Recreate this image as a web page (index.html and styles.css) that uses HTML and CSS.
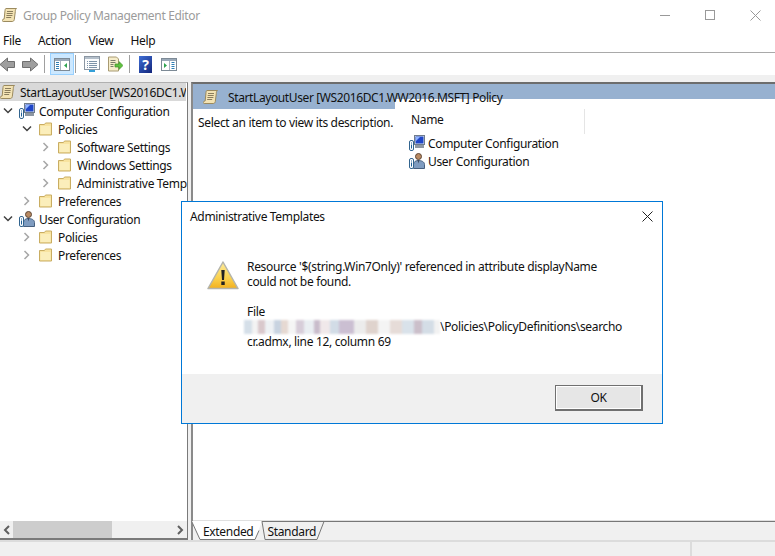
FILE: index.html
```html
<!DOCTYPE html>
<html lang="en">
  <head>
    <meta charset="UTF-8" />
    <title>Group Policy Management Editor</title>
    <link rel="stylesheet" href="styles.css">
  </head>
  <body>
    <svg class="defs" width="0" height="0">
      <defs>
        <linearGradient id="warn-fill" x1="0" y1="0" x2="0" y2="1">
          <stop offset="0" stop-color="#fdeb9c" />
          <stop offset="0.6" stop-color="#fbd24e" />
          <stop offset="1" stop-color="#f2b01e" />
        </linearGradient>
      </defs>
      <symbol id="scroll" viewBox="0 0 16 16">
        <path d="M4 1.500h10.500c-1.200 1-1.200 2-1.200 3l-1 8c-.2 1.300-1 2-2 2H1.200c-.8 0-1-.8-.8-1.400.2-.8 1-1.200 1.800-1.200L3 3.500c.1-1 .4-2 1-2z" fill="#f3e3b4" stroke="#9b8a5e" />
        <path d="M5 4.500h6M4.700 6.500h6M4.400 8.500h6M4.200 10.500h5" stroke="#8a7d5d" />
      </symbol>
      <symbol id="folder" viewBox="0 0 16 16">
        <path d="M1.500 14V3.500h5l1-1.500h6v12z" fill="#f8e39f" stroke="#c9ad62" />
        <path d="M2.500 13V5h10v8z" fill="#fbeebb" />
      </symbol>
      <symbol id="computer" viewBox="0 0 16 16">
        <rect x="5.500" y=".5" width="10" height="9" fill="#dfe6ee" stroke="#6f7c8c" />
        <rect x="6.500" y="1.500" width="8" height="7" fill="#1f46c8" />
        <path d="M7 2l4 0-4 4z" fill="#8fb4ff" />
        <rect x="6" y="10" width="9" height="3" fill="#8d97a3" />
        <rect x=".5" y="5.500" width="4" height="10" rx="1.500" fill="#fff" stroke="#31648f" />
        <path d="M2.500 7.500v1M2.500 9.500v4" stroke="#1f5f96" />
      </symbol>
      <symbol id="user" viewBox="0 0 16 16">
        <circle cx="9.500" cy="3.500" r="3" fill="#b98a62" stroke="#5e4635" />
        <path d="M4.500 15.500v-4C4.500 8.500 7 7.500 9.500 7.500s6 1 6 4v4z" fill="#7f9cc0" stroke="#47607f" />
        <path d="M8.500 7h2l-1 3.500z" fill="#3d4b60" />
        <rect x=".5" y="5.500" width="4" height="10" rx="1.500" fill="#fff" stroke="#31648f" />
        <path d="M2.500 7.500v1M2.500 9.500v4" stroke="#1f5f96" />
      </symbol>
      <symbol id="chev-right" viewBox="0 0 8 10">
        <path d="M1.500 1l4 4-4 4" fill="none" stroke="#a6a6a6" stroke-width="1.500" />
      </symbol>
      <symbol id="chev-down" viewBox="0 0 10 8">
        <path d="M1 1.500l4 4 4-4" fill="none" stroke="#404040" stroke-width="1.500" />
      </symbol>
      <symbol id="panel" viewBox="0 0 16 16">
        <rect x=".5" y="2.500" width="15" height="12" fill="#fff" stroke="#7d8a96" />
        <rect x="1" y="3" width="14" height="2" fill="#9aa9b8" />
        <path d="M2 6.500h3M2 8.500h3M2 10.500h3M2 12.500h3" stroke="#2f7fb5" />
        <path d="M6.500 5v9" stroke="#aab4be" />
        <path d="M13 7v5l-3-2.500z" fill="#2fa44f" />
      </symbol>
    </svg>

    <div class="window">
      <header class="titlebar">
        <svg class="icon"><use href="#scroll" /></svg>
        <span class="title-text">Group Policy Management Editor</span>
        <div class="controls">
          <span class="min-btn"></span>
          <span class="max-btn"></span>
          <svg class="close-btn" viewBox="0 0 11 11"><path d="M.5.500l10 10M10.500.500l-10 10" stroke="#999" /></svg>
        </div>
      </header>

      <nav class="menubar">
        <span>File</span>
        <span>Action</span>
        <span>View</span>
        <span>Help</span>
      </nav>

      <div class="toolbar">
        <svg class="arrows" viewBox="0 0 38 15">
          <path d="M0 7.500L7.500 1v3.500h7v6h-7V14z" fill="#9e9e9e" stroke="#6f6f6f" />
          <path d="M38 7.500L30.500 1v3.500h-8v6h8V14z" fill="#9e9e9e" stroke="#6f6f6f" />
        </svg>
        <i class="sep"></i>
        <span class="tool-on">
          <svg class="icon"><use href="#panel" /></svg>
        </span>
        <i class="sep"></i>
        <svg class="icon tool-a" viewBox="0 0 16 16">
          <rect x=".5" y=".5" width="15" height="13" fill="#fbfcfd" stroke="#8b96a2" />
          <rect x="1" y="1" width="14" height="2" fill="#b4bfca" />
          <path d="M3 5.500h1M5 5.500h8M3 7.500h1M5 7.500h8M3 9.500h1M5 9.500h8M3 11.500h1M5 11.500h8" stroke="#7d93a8" />
          <rect x="5" y="14" width="6" height="2" fill="#35a0d8" />
        </svg>
        <svg class="icon tool-b" viewBox="0 0 16 16">
          <path d="M1.500 1h8l2 2v12h-10z" fill="#f6edca" stroke="#a89a72" />
          <path d="M3.500 4.500h5M3.500 6.500h5M3.500 8.500h3M3.500 10.500h3" stroke="#7c7c6c" />
          <path d="M8 8h4V5.500L16 9.500l-4 4V11H8z" fill="#5fc13f" stroke="#3f8f2a" stroke-width=".7" />
        </svg>
        <i class="sep sep-wide"></i>
        <span class="help-icon">?</span>
        <svg class="icon tool-c" viewBox="0 0 16 16">
          <rect x=".5" y="2.500" width="15" height="12" fill="#fff" stroke="#7d8a96" />
          <rect x="1" y="3" width="14" height="2" fill="#9aa9b8" />
          <path d="M3 7v5l3-2.500z" fill="#2fa44f" />
          <path d="M8.500 5v9" stroke="#aab4be" />
          <path d="M10.500 6.500h3M10.500 8.500h3M10.500 10.500h3M10.500 12.500h3" stroke="#2f7fb5" />
        </svg>
      </div>

      <div class="workspace">
        <aside class="tree-pane">
          <ul class="tree">
            <li class="row selected"><svg class="icon"><use href="#scroll" /></svg><span>StartLayoutUser [WS2016DC1.WW2016.MSFT] Policy</span></li>
            <li class="row lvl-1"><svg class="chev-d"><use href="#chev-down" /></svg><svg class="icon"><use href="#computer" /></svg><span>Computer Configuration</span></li>
            <li class="row lvl-2"><svg class="chev-d"><use href="#chev-down" /></svg><svg class="icon"><use href="#folder" /></svg><span>Policies</span></li>
            <li class="row lvl-3"><svg class="chev-r"><use href="#chev-right" /></svg><svg class="icon"><use href="#folder" /></svg><span>Software Settings</span></li>
            <li class="row lvl-3"><svg class="chev-r"><use href="#chev-right" /></svg><svg class="icon"><use href="#folder" /></svg><span>Windows Settings</span></li>
            <li class="row lvl-3"><svg class="chev-r"><use href="#chev-right" /></svg><svg class="icon"><use href="#folder" /></svg><span>Administrative Templates</span></li>
            <li class="row lvl-2"><svg class="chev-r"><use href="#chev-right" /></svg><svg class="icon"><use href="#folder" /></svg><span>Preferences</span></li>
            <li class="row lvl-1"><svg class="chev-d"><use href="#chev-down" /></svg><svg class="icon"><use href="#user" /></svg><span>User Configuration</span></li>
            <li class="row lvl-2"><svg class="chev-r"><use href="#chev-right" /></svg><svg class="icon"><use href="#folder" /></svg><span>Policies</span></li>
            <li class="row lvl-2"><svg class="chev-r"><use href="#chev-right" /></svg><svg class="icon"><use href="#folder" /></svg><span>Preferences</span></li>
          </ul>
          <div class="hscroll">
            <svg class="scroll-arrow" viewBox="0 0 8 10"><path d="M6 1L2 5l4 4" fill="none" stroke="#606060" stroke-width="2" /></svg>
            <div class="scroll-track"><div class="scroll-thumb"></div></div>
            <svg class="scroll-arrow" viewBox="0 0 8 10"><path d="M2 1l4 4-4 4" fill="none" stroke="#606060" stroke-width="2" /></svg>
          </div>
        </aside>

        <main class="detail-pane">
          <div class="detail-body">
            <section class="desc-col">
              <div class="band band-tall">
                <svg class="icon"><use href="#scroll" /></svg>
                <span class="band-title">StartLayoutUser [WS2016DC1.WW2016.MSFT] Policy</span>
              </div>
              <p class="desc-text">Select an item to view its description.</p>
            </section>
            <section class="list-col">
              <div class="band band-short"></div>
              <div class="list-head"><span>Name</span></div>
              <div class="list-item"><svg class="icon"><use href="#computer" /></svg><span>Computer Configuration</span></div>
              <div class="list-item"><svg class="icon"><use href="#user" /></svg><span>User Configuration</span></div>
            </section>
          </div>
          <div class="tabstrip">
            <svg class="tab-shapes" viewBox="0 0 140 20">
              <path d="M.5 0L9 18.500h55L71 0z" fill="#fff" />
              <path d="M71 1l3 17.500h52L133 1z" fill="#f0f0f0" />
              <path d="M.5 0L9 18.500h55l4-9M71 .5l3 18h52l7-18" fill="none" stroke="#777" />
            </svg>
            <span class="tab">Extended</span>
            <span class="tab">Standard</span>
          </div>
        </main>
      </div>

      <footer class="statusbar">
        <span class="status-main"></span>
        <span class="status-side"></span>
      </footer>
    </div>

    <div class="dialog">
      <div class="dialog-head">
        <span>Administrative Templates</span>
        <svg class="dialog-close" viewBox="0 0 11 11"><path d="M.5.500l10 10M10.500.500l-10 10" stroke="#222" /></svg>
      </div>
      <div class="dialog-body">
        <svg class="warn" viewBox="0 0 32 29">
          <path d="M16 1L1 27.500h30z" fill="url(#warn-fill)" stroke="#b4b4ac" stroke-width="1.500" stroke-linejoin="round" />
          <path d="M14.300 9h3.400l-.7 10h-2zM14.300 20.500h3.400v3.500h-3.400z" fill="#222" />
        </svg>
        <div class="message">
          <p>Resource '$(string.Win7Only)' referenced in attribute displayName<br />could not be found.</p>
          <p>File<br /><span class="redacted"></span>\Policies\PolicyDefinitions\searcho<br />cr.admx, line 12, column 69</p>
        </div>
      </div>
      <div class="dialog-foot">
        <button type="button" class="ok-btn">OK</button>
      </div>
    </div>
  </body>
</html>
```

FILE: styles.css
```css
/* General */
* {
  box-sizing: border-box;
}

body {
  margin: 0;
  background: #fff;
  color: #111;
  font-family: "Noto Sans", "Open Sans", sans-serif;
  font-size: 12px;
  letter-spacing: -0.33px;
  overflow: hidden;
}

.defs {
  position: absolute;
}

.icon {
  width: 16px;
  height: 16px;
  flex: none;
}

.window {
  display: flex;
  flex-direction: column;
  height: 556px;
}

/* Title bar */
.titlebar {
  display: flex;
  align-items: center;
  height: 30px;
  padding-left: 2px;
  gap: 5px;
  color: #9b9b9b;
}

.controls {
  display: flex;
  align-items: center;
  margin-left: auto;
  height: 100%;
  padding-right: 14px;
}

.min-btn {
  width: 10px;
  height: 1px;
  background: #999;
  margin-right: 35px;
}

.max-btn {
  width: 10px;
  height: 10px;
  border: 1px solid #999;
  margin-right: 35px;
}

.close-btn {
  width: 11px;
  height: 11px;
}

/* Menu */
.menubar {
  display: flex;
  align-items: center;
  gap: 17px;
  height: 23px;
  padding: 0 0 2px 3px;
  border-bottom: 1px solid #a9a9a9;
}

/* Toolbar */
.toolbar {
  display: flex;
  align-items: center;
  height: 22px;
}

.arrows {
  width: 38px;
  height: 15px;
  flex: none;
  margin-right: 6px;
}

.sep {
  width: 1px;
  height: 18px;
  background: #a0a0a0;
  flex: none;
}

.sep-wide {
  margin: 0 9px 0 6px;
}

.tool-on {
  display: flex;
  align-items: center;
  justify-content: center;
  width: 24px;
  height: 22px;
  margin: 0 1px 0 5px;
  background: #cce8ff;
  border: 1px solid #99d1ff;
}

.tool-a {
  margin-left: 8px;
}

.tool-b {
  margin-left: 7px;
}

.help-icon {
  width: 13px;
  height: 17px;
  background: linear-gradient(135deg, #3f6fd6, #12247a);
  color: #fff;
  font-weight: bold;
  font-size: 14px;
  line-height: 17px;
  text-align: center;
  flex: none;
}

.tool-c {
  margin-left: 9px;
}

/* Panes */
.workspace {
  flex: 1;
  display: flex;
  min-height: 0;
  padding-top: 7px;
  background: #f0f0f0;
}

.tree-pane {
  display: flex;
  flex-direction: column;
  width: 188px;
  border-top: 1px solid #b0b0b0;
  border-right: 1px solid #7a7a7a;
  border-bottom: 2px solid #7a7a7a;
  background: #fff;
}

.tree {
  flex: 1;
  margin: 0;
  padding: 0;
  list-style: none;
}

.row {
  display: flex;
  align-items: center;
  height: 18px;
  white-space: nowrap;
  overflow: hidden;
}

.row .icon {
  margin-right: 4px;
}

.selected {
  background: #d9d9d9;
  margin: 0 1px 1px 0;
}

.lvl-1 {
  padding-left: 3px;
}

.lvl-2 {
  padding-left: 22px;
}

.lvl-3 {
  padding-left: 41px;
}

.chev-d {
  width: 10px;
  height: 8px;
  margin-right: 6px;
  flex: none;
}

.chev-r {
  width: 8px;
  height: 10px;
  margin: 0 7px 0 1px;
  flex: none;
}

.hscroll {
  display: flex;
  align-items: center;
  height: 17px;
  background: #f0f0f0;
}

.scroll-arrow {
  width: 8px;
  height: 10px;
  margin: 0 3px;
  flex: none;
}

.scroll-track {
  flex: 1;
  height: 100%;
  margin-left: -1px;
}

.scroll-thumb {
  width: 99px;
  height: 100%;
  background: #cdcdcd;
}

/* Right pane */
.detail-pane {
  flex: 1;
  display: flex;
  flex-direction: column;
  margin-left: 3px;
  min-width: 0;
  border-top: 2px solid #6d6d6d;
  border-left: 2px solid #8a8a8a;
  background: #fff;
}

.detail-body {
  flex: 1;
  display: flex;
  min-height: 0;
  border-bottom: 1px solid #e0e0e0;
}

.desc-col {
  position: relative;
  z-index: 1;
  width: 202px;
  flex: none;
}

.list-col {
  flex: 1;
}

.band {
  background: #97b1d0;
}

.band-tall {
  display: flex;
  align-items: center;
  gap: 9px;
  height: 25px;
  padding-left: 10px;
  white-space: nowrap;
}

.band-short {
  height: 15px;
}

.band-title {
  padding-top: 1px;
  letter-spacing: -0.39px;
}

.desc-text {
  margin: 5px 0 0 5px;
  white-space: nowrap;
}

.list-head {
  width: 190px;
  height: 25px;
  margin-top: 10px;
  padding-left: 16px;
  border-right: 1px solid #e5e5e5;
  line-height: 22px;
}

.list-item {
  display: flex;
  align-items: center;
  gap: 3px;
  height: 18px;
  padding-left: 14px;
}

.tabstrip {
  position: relative;
  display: flex;
  align-items: center;
  gap: 14px;
  height: 19px;
  padding-left: 10px;
  background: #f0f0f0;
  border-top: 1px solid #777;
}

.tab-shapes {
  position: absolute;
  left: -2px;
  top: -1px;
  width: 140px;
  height: 20px;
  overflow: visible;
}

.tab {
  position: relative;
}

/* Status bar */
.statusbar {
  display: flex;
  height: 16px;
  background: #f0f0f0;
  border-top: 2px solid #dcdcdc;
}

.status-main {
  width: 692px;
  border-right: 2px solid #dcdcdc;
}

/* Message box */
.dialog {
  position: absolute;
  left: 181px;
  top: 201px;
  width: 482px;
  height: 223px;
  display: flex;
  flex-direction: column;
  background: #fff;
  border: 1px solid #0078d7;
}

.dialog-head {
  display: flex;
  align-items: center;
  justify-content: space-between;
  height: 29px;
  padding: 0 9px 0 8px;
}

.dialog-close {
  width: 11px;
  height: 11px;
}

.dialog-body {
  flex: 1;
  display: flex;
  padding: 30px 0 0 25px;
}

.warn {
  width: 32px;
  height: 29px;
  flex: none;
  margin-right: 8px;
}

.message {
  margin-top: -2px;
  line-height: 15px;
}

.message p {
  margin: 0 0 15px;
  white-space: nowrap;
}

.redacted {
  display: inline-block;
  width: 196px;
  height: 14px;
  margin-left: -3px;
  vertical-align: -3px;
  filter: blur(1px);
  background: linear-gradient(90deg,
    #d5dfe8 0 8px, #f3f3f3 8px 14px, #d9c8cc 14px 21px, #eef1f4 21px 30px,
    #c8d3e0 30px 37px, #e6d9d2 37px 44px, #f5f5f5 44px 52px, #d7cdd9 52px 60px,
    #eaeef2 60px 70px, #c9bccb 70px 76px, #f0e8ea 76px 86px, #d2dce6 86px 95px,
    #cbbfd2 95px 110px, #ececec 110px 122px, #dfd3cd 122px 134px, #f4f4f4 134px 146px,
    #e6dcd8 146px 158px, #d9e2ea 158px 170px, #cbbfca 170px 178px, #d4dde6 178px 190px,
    #f2f2f2 190px 196px);
}

.dialog-foot {
  display: flex;
  justify-content: flex-end;
  align-items: flex-start;
  height: 49px;
  padding: 11px 19px 0 0;
  background: #f0f0f0;
}

.ok-btn {
  width: 88px;
  height: 26px;
  padding: 0;
  font: inherit;
  letter-spacing: inherit;
  color: #111;
  background: #e6e6e6;
  border-style: solid;
  border-color: #707070;
  border-width: 1px 2px 2px 1px;
  box-shadow: inset 0 0 0 1px #fff;
}
```
